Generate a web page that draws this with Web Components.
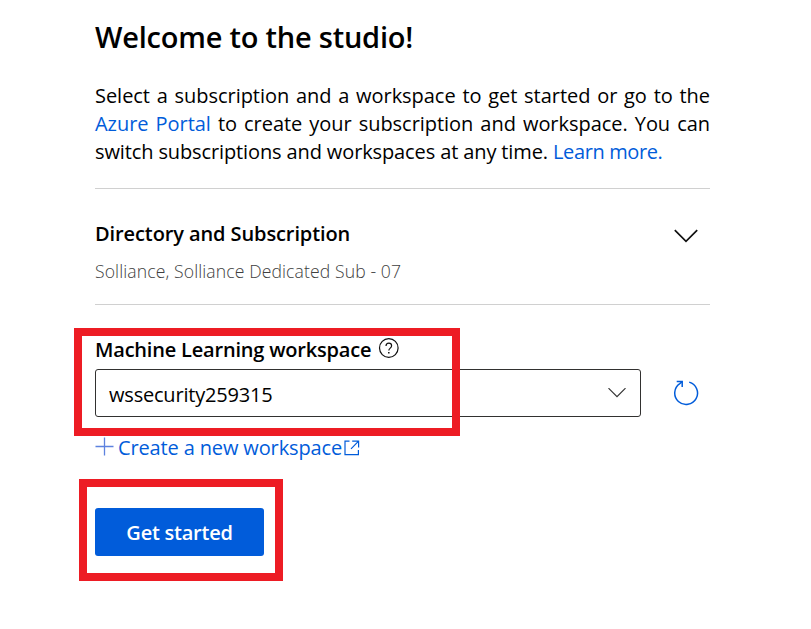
<!DOCTYPE html>
<html lang="en">
<head>
<meta charset="utf-8">
<title>Welcome to the studio</title>
<style>
html, body { margin: 0; background: #fff; }
body { width: 811px; height: 629px; overflow: hidden; position: relative; font: 400 20px/28px "Open Sans", "Noto Sans", sans-serif; color: #000; }
</style>
</head>
<body>
<studio-welcome></studio-welcome>
<script>
const define = (name, html) => customElements.define(name, class extends HTMLElement {
  connectedCallback() {
    if (!this.shadowRoot) this.attachShadow({ mode: 'open' }).innerHTML = html;
  }
});

define('ui-link', `<style>:host{display:inline;color:#015cda}</style><slot></slot>`);

define('intro-text', `<style>
:host{display:block;margin-top:25px;height:84px;white-space:nowrap}
div{text-align:justify;text-align-last:justify;white-space:normal;letter-spacing:-.04px}
div.last{text-align-last:left;letter-spacing:-.12px}
.more{letter-spacing:-.38px}
</style>
<div>Select a subscription and a workspace to get started or go to the</div>
<div><ui-link>Azure Portal</ui-link> to create your subscription and workspace. You can</div>
<div class="last">switch subscriptions and workspaces at any time. <ui-link class="more">Learn more.</ui-link></div>`);

define('directory-section', `<style>
:host{display:flex;justify-content:space-between;box-sizing:border-box;height:117px;margin-top:22px;padding-top:30px;border:solid #d0d0d0;border-width:1px 0}
h2{margin:1px 0 0;font-size:20px;font-weight:600;letter-spacing:-.1px;line-height:28px}
p{margin:11px 0 0;font-size:17.6px;line-height:25px;font-weight:300;letter-spacing:.1px;color:#404040}
svg{margin:10px 12px 0 0}
</style>
<div><h2><slot name="title"></slot></h2><p><slot name="detail"></slot></p></div>
<svg width="24" height="14" viewBox="0 0 24 14" fill="none" stroke="#111" stroke-width="1.7"><path d="M.8 1.2 12 12.4 23.2 1.2"/></svg>`);

define('workspace-picker', `<style>
:host{display:block;padding-top:31px}
.label{display:flex;height:28px;font-weight:600;letter-spacing:-.2px}
.label svg{margin:2px 0 0 7px}
.row{display:flex;align-items:center;margin-top:5px}
.select{box-sizing:border-box;width:546px;height:48px;border:1px solid #323130;border-radius:3px;display:flex;align-items:center;justify-content:space-between;padding:0 14px 0 13px;letter-spacing:-.2px}
.select span{padding-top:3px}
.refresh{margin-left:32px}
.create{display:flex;margin-top:17px;color:#015cda;letter-spacing:-.14px}
.plus{margin:3px 4px 0 0}
.open{margin:6px 0 0 2px}
</style>
<div class="label"><span>Machine Learning workspace</span>
<svg width="21" height="21" viewBox="0 0 21 21" fill="none" stroke="#111"><circle cx="10.8" cy="10" r="9.3" stroke-width="1.2"/><path d="M8 8.1C8 6.3 9.2 5.2 10.9 5.2s2.7 1.1 2.7 2.6c0 2.3-2.8 2.3-2.8 4.7" stroke-width="1.2"/><path d="M10.8 14v1.6" stroke-width="1.5"/></svg></div>
<div class="row"><div class="select"><span>wssecurity259315</span>
<svg width="18" height="10" viewBox="0 0 18 10" fill="none" stroke="#333" stroke-width="1.2"><path d="M.5.2 9 8.7 17.5.2"/></svg></div>
<svg class="refresh" width="26" height="26" viewBox="0 0 26 26" fill="none" stroke="#015cda" stroke-width="1.5"><path d="M16.2 2.1A11.4 11.4 0 1 1 6.8 3.6L9.2 1.7"/><path d="M3.7 1.5H9.2V7"/></svg></div>
<div class="create"><svg class="plus" width="19" height="19" viewBox="0 0 19 19" stroke="#5d82df" stroke-width="1.3"><path d="M9.5.5v18M.5 9.5h18"/></svg><span>Create a new workspace</span>
<svg class="open" width="16" height="16" viewBox="0 0 16 16" fill="none" stroke="#015cda" stroke-width="1.2"><path d="M5.5 1.2H1v13.4h13.4V10M8.2 1.2h6.4v6.4M14.6 1.2 7 8.8"/></svg></div>`);

define('primary-button', `<style>
:host{display:block}
button{display:block;width:169px;height:48px;margin:0;padding:2px 0 0;border:0;border-radius:3px;background:#015cda;color:#fff;font:inherit;font-weight:600;letter-spacing:-.24px}
</style><button><slot></slot></button>`);

define('callout-frame', `<style>
:host{position:absolute;box-sizing:border-box;border:8px solid #ed1c24;pointer-events:none}
</style>`);

define('studio-welcome', `<style>
:host{display:block;box-sizing:border-box;width:710px;padding:17px 0 0 95px}
h1{margin:0;font-size:29px;line-height:40px;font-weight:600;letter-spacing:-.22px}
primary-button{margin-top:46px}
.field{left:74px;top:328px;width:386px;height:108px}
.action{left:79px;top:479px;width:204px;height:102px}
</style>
<h1>Welcome to the studio!</h1>
<intro-text></intro-text>
<directory-section><span slot="title">Directory and Subscription</span><span slot="detail">Solliance, Solliance Dedicated Sub - 07</span></directory-section>
<workspace-picker></workspace-picker>
<primary-button>Get started</primary-button>
<callout-frame class="field"></callout-frame>
<callout-frame class="action"></callout-frame>`);
</script>
</body>
</html>
